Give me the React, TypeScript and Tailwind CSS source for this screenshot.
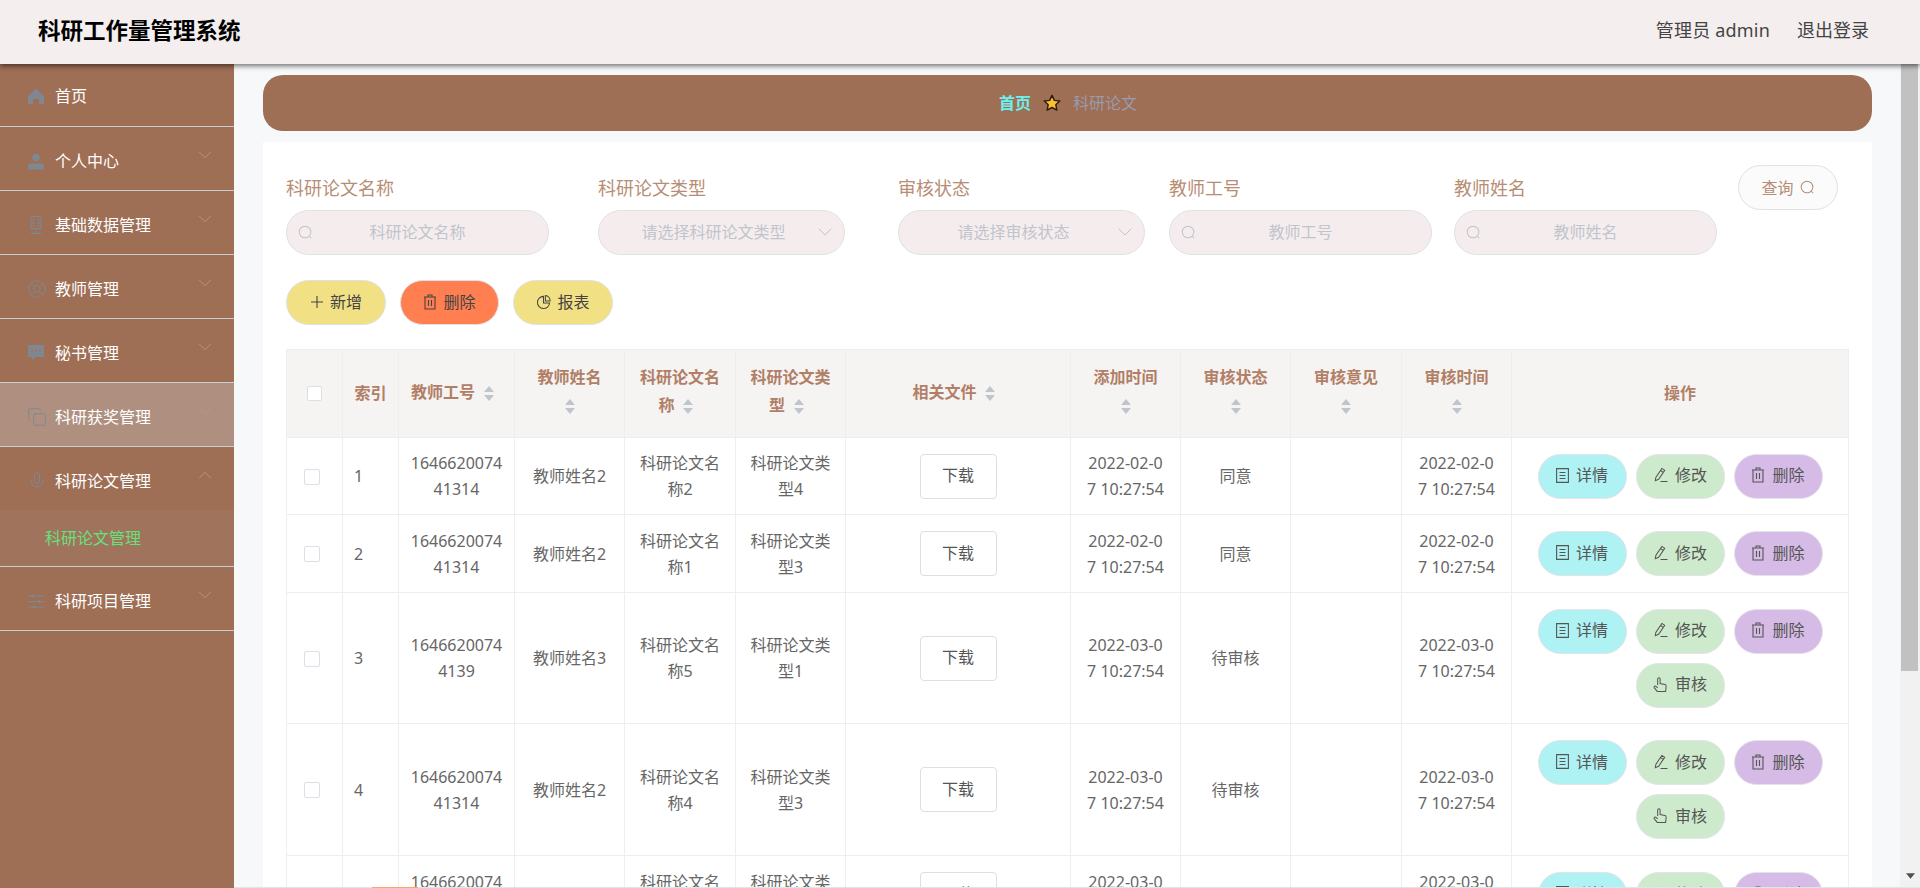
import { ChevronDown, ChevronUp, Copy, LifeBuoy, Mic } from "lucide-react";
import type { ReactNode } from "react";

const line = { fill: "none", stroke: "currentColor", strokeWidth: 1.1 };

const SearchIcon = ({ className }: { className: string }) => (
  <svg viewBox="0 0 16 16" className={className} {...line}>
    <circle cx="7.5" cy="7.5" r="6.2" />
    <path d="M12 12l2 2" />
  </svg>
);

const PlusIcon = () => (
  <svg viewBox="0 0 14 14" className="w-[14px] h-[14px]" {...line}>
    <path d="M7 1v12M1 7h12" />
  </svg>
);

const TrashIcon = () => (
  <svg viewBox="0 0 14 16" className="w-[14px] h-[16px]" {...line}>
    <path d="M1 3h12M5 3V1h4v2M2 3v12h10V3M5.5 6v6M8.5 6v6" />
  </svg>
);

const ChartIcon = () => (
  <svg viewBox="0 0 16 16" className="w-[15px] h-[16px]" {...line}>
    <path d="M8 2a6.5 6.5 0 1 0 6.5 7H8z" />
    <path d="M10 1a5.5 5.5 0 0 1 5 6h-5z" />
  </svg>
);

const DocIcon = () => (
  <svg viewBox="0 0 13 15" className="w-[13px] h-[15px]" {...line}>
    <path d="M.6.6h11.8v13.8H.6zM3.5 4.5h6M3.5 7.5h6M3.5 10.5h6" />
  </svg>
);

const EditIcon = () => (
  <svg viewBox="0 0 16 16" className="w-[15px] h-[16px]" {...line}>
    <path d="M9.5 1l3 2-6.500 9.500-3.500 1.500.5-3.500zM8 3.200l3 2M8 15h7.500" />
  </svg>
);

const ThumbIcon = () => (
  <svg viewBox="0 0 16 16" className="w-[15px] h-[15px]" {...line}>
    <path d="M5 8.500V2a1.300 1.300 0 0 1 2.600 0v5l5.200 1a1.600 1.600 0 0 1 1.200 1.700l-.5 5.700H4.500L1.300 11.300a1.100 1.100 0 0 1 1.500-1.500L5 11.500" />
  </svg>
);

const HomeIcon = () => (
  <svg viewBox="0 0 16 16" className="w-[16px] h-[16px]" fill="currentColor">
    <path d="M8 .5L16 8v8h-5v-5H5v5H0V8z" />
  </svg>
);

const UserIcon = () => (
  <svg viewBox="0 0 16 16" className="w-[16px] h-[17px]" fill="currentColor">
    <circle cx="8" cy="4" r="3.800" />
    <path d="M0 12.500a2.500 2.500 0 0 1 2.500-2.500h11a2.500 2.500 0 0 1 2.500 2.500V16H0z" />
  </svg>
);

const RecorderIcon = () => (
  <svg viewBox="0 0 12 18" className="w-[12px] h-[18px] ml-[2px]" fill="none" stroke="currentColor" strokeWidth="1.100">
    <path d="M2 .6h8a1 1 0 0 1 1 1v10a1 1 0 0 1-1 1H2a1 1 0 0 1-1-1v-10a1 1 0 0 1 1-1zM6 12.600v4.800M1 17.400h10M1 4h4M1 7h4M1 10h4M7 4h4M7 7h4M7 10h4" />
  </svg>
);

const ChatIcon = () => (
  <svg viewBox="0 0 16 16" className="w-[16px] h-[16px]" fill="currentColor">
    <path d="M0 0h16v12H7l-3 3.500V12H0z" />
    <circle cx="4" cy="6" r="1" fill="#b0685c" />
    <circle cx="8" cy="6" r="1" fill="#b0685c" />
    <circle cx="12" cy="6" r="1" fill="#b0685c" />
  </svg>
);

const SlidersIcon = () => (
  <svg viewBox="0 0 16 15" className="w-[16px] h-[15px]" fill="currentColor">
    <path d="M0 1.500h16v1H0zM0 7h16v1H0zM0 12.500h16v1H0z" />
    <circle cx="4.500" cy="2" r="1.600" />
    <circle cx="11" cy="7.500" r="1.600" />
    <circle cx="6" cy="13" r="1.600" />
  </svg>
);

const menus: { name: string; icon: ReactNode; arrow?: boolean }[] = [
  { name: "首页", icon: <HomeIcon /> },
  { name: "个人中心", icon: <UserIcon />, arrow: true },
  { name: "基础数据管理", icon: <RecorderIcon />, arrow: true },
  { name: "教师管理", icon: <LifeBuoy className="w-[20px] h-[20px] -ml-[1px]" strokeWidth={1.2} />, arrow: true },
  { name: "秘书管理", icon: <ChatIcon />, arrow: true },
  { name: "科研获奖管理", icon: <Copy className="w-[20px] h-[20px] -ml-[1px]" strokeWidth={1.1} />, arrow: true },
];

const MenuItem = ({ name, icon, arrow, first, hover }: { name: string; icon: ReactNode; arrow?: boolean; first?: boolean; hover?: boolean }) => (
  <div className={`flex items-center pl-[28px] pr-[18px] border-b border-[#c9ced2] ${first ? "h-[63px] pt-[2px]" : "h-[64px] pt-[5px]"} ${hover ? "bg-[#ae8f80]" : ""}`}>
    <span className="w-[27px] flex justify-start text-[#7f8791]">{icon}</span>
    <span className="text-white text-[16px] flex-1">{name}</span>
    {arrow && <ChevronDown className="w-[22px] h-[22px] mb-[12px] text-[#b59a8b]" strokeWidth={1} />}
  </div>
);

const Sidebar = () => (
  <aside className="w-[234px] shrink-0 bg-[#9e6e55]">
    {menus.map((m, i) => (
      <MenuItem key={m.name} {...m} first={i === 0} hover={i === 5} />
    ))}
    <div className="flex items-center h-[63px] pt-[5px] pl-[28px] pr-[18px]">
      <span className="w-[27px] flex justify-start text-[#7f8791]"><Mic className="w-[20px] h-[20px] -ml-[1px]" strokeWidth={1.2} /></span>
      <span className="text-white text-[16px] flex-1">科研论文管理</span>
      <ChevronUp className="w-[22px] h-[22px] mb-[12px] text-[#b59a8b]" strokeWidth={1} />
    </div>
    <div className="h-[57px] flex items-center pl-[45px] bg-[#a0735c] border-b border-[#c9ced2] text-[16px] text-[#68e07c]">科研论文管理</div>
    <MenuItem name="科研项目管理" icon={<SlidersIcon />} arrow />
  </aside>
);

const SearchField = ({ label, className }: { label: string; className: string }) => (
  <div className={`mt-[11px] w-[263px] ${className}`}>
    <div className="text-[18px] leading-[24px] mb-[10px] text-[#b88d75]">{label}</div>
    <div className="h-[45px] rounded-[23px] border border-[#dfe1e8] bg-[#f5eded] flex items-center relative justify-center pb-[2px] text-[16px] text-[#c0c4cc]">
      <SearchIcon className="absolute left-[11px] top-[14px] w-[15px] h-[15px]" />
      {label}
    </div>
  </div>
);

const SelectField = ({ label, placeholder, className }: { label: string; placeholder: string; className: string }) => (
  <div className={`mt-[11px] w-[247px] ${className}`}>
    <div className="text-[18px] leading-[24px] mb-[10px] text-[#b88d75]">{label}</div>
    <div className="h-[45px] rounded-[23px] border border-[#dfe1e8] bg-[#f5eded] flex items-center justify-center pr-[16px] pb-[2px] relative text-[16px] text-[#c0c4cc]">
      {placeholder}
      <ChevronDown className="absolute right-[7px] top-[9px] w-[24px] h-[24px]" strokeWidth={1} />
    </div>
  </div>
);

const TopButton = ({ bg, width, icon, text }: { bg: string; width: string; icon: ReactNode; text: string }) => (
  <button className={`h-[45px] ${width} ${bg} rounded-[23px] border border-[#dfe1e8] flex items-center justify-center gap-[6px] pb-[2px] text-[16px] text-[#444]`}>
    {icon}
    {text}
  </button>
);

const OpButton = ({ bg, icon, text }: { bg: string; icon: ReactNode; text: string }) => (
  <button className={`h-[45px] w-[89px] ${bg} rounded-[23px] border border-[#e3e3ea] flex items-center justify-center gap-[7px] pb-[2px] text-[16px] text-[#555]`}>
    {icon}
    {text}
  </button>
);

const Sort = () => (
  <span className="inline-flex flex-col items-center justify-center gap-[3px] w-[27px] h-[34px] align-middle">
    <i className="w-0 h-0 border-x-[5px] border-x-transparent border-b-[6px] border-b-[#c0c4cc]" />
    <i className="w-0 h-0 border-x-[5px] border-x-transparent border-t-[6px] border-t-[#c0c4cc]" />
  </span>
);

const colWidths = ["w-[56px]", "w-[56px]", "w-[116px]", "w-[110px]", "w-[111px]", "w-[110px]", "w-[225px]", "w-[110px]", "w-[110px]", "w-[111px]", "w-[110px]", "w-[337px]"];

const heads = ["教师工号", "教师姓名", "科研论文名称", "科研论文类型", "相关文件", "添加时间", "审核状态", "审核意见", "审核时间"];

const rows = [
  { h: "h-[77px]", no: 1, code: "164662007441314", teacher: "教师姓名2", title: "科研论文名称2", type: "科研论文类型4", date: ["2022-02-0", "7 10:27:54"], state: "同意" },
  { h: "h-[78px]", no: 2, code: "164662007441314", teacher: "教师姓名2", title: "科研论文名称1", type: "科研论文类型3", date: ["2022-02-0", "7 10:27:54"], state: "同意" },
  { h: "h-[131px]", no: 3, code: "16466200744139", teacher: "教师姓名3", title: "科研论文名称5", type: "科研论文类型1", date: ["2022-03-0", "7 10:27:54"], state: "待审核" },
  { h: "h-[132px]", no: 4, code: "164662007441314", teacher: "教师姓名2", title: "科研论文名称4", type: "科研论文类型3", date: ["2022-03-0", "7 10:27:54"], state: "待审核" },
  { h: "h-[78px]", no: 5, code: "164662007441314", teacher: "教师姓名1", title: "科研论文名称3", type: "科研论文类型2", date: ["2022-03-0", "7 10:27:54"], state: "同意" },
];

const td = "border border-[#ebeef5] px-[10px] text-center break-all";

const DateCell = ({ date }: { date: string[] }) => (
  <td className={td}>
    {date[0]}
    <br />
    {date[1]}
  </td>
);

const PaperTable = () => (
  <table className="table-fixed w-[1562px] mt-[24px] border-collapse text-[16px] leading-[26px]">
    <colgroup>
      {colWidths.map((w, i) => (
        <col key={i} className={w} />
      ))}
    </colgroup>
    <thead>
      <tr className="h-[88px] bg-[#f6f3f3] text-[#b07f66] font-bold">
        <th className={td}>
          <span className="block w-[15px] h-[15px] mx-auto bg-white border border-[#dcdfe6] rounded-[2px]" />
        </th>
        <th className={`${td} !px-0 !pb-[2px]`}>索引</th>
        {heads.map((h) => (
          <th key={h} className={td}>
            {h}
            <Sort />
          </th>
        ))}
        <th className={`${td} !pb-[2px]`}>操作</th>
      </tr>
    </thead>
    <tbody className="text-[#666]">
      {rows.map((r) => (
        <tr key={r.no} className={r.h}>
          <td className={td}>
            <span className="block w-[16px] h-[16px] ml-[7px] mt-[1px] bg-white border border-[#dcdfe6] rounded-[2px]" />
          </td>
          <td className={`${td} !text-left !pl-[11px]`}>{r.no}</td>
          <td className={td}>{r.code}</td>
          <td className={td}>{r.teacher}</td>
          <td className={td}>{r.title}</td>
          <td className={td}>{r.type}</td>
          <td className={td}>
            <button className="w-[77px] h-[45px] pb-[2px] rounded-[4px] border border-[#dcdfe6] bg-white text-[#555]">下载</button>
          </td>
          <DateCell date={r.date} />
          <td className={td}>{r.state}</td>
          <td className={td}></td>
          <DateCell date={r.date} />
          <td className={td}>
            <div className="flex flex-wrap justify-center gap-x-[9px] gap-y-[9px]">
              <OpButton bg="bg-[#aef2f3]" icon={<DocIcon />} text="详情" />
              <OpButton bg="bg-[#cdebcc]" icon={<EditIcon />} text="修改" />
              <OpButton bg="bg-[#d6bbe6]" icon={<TrashIcon />} text="删除" />
              {r.state === "待审核" && <OpButton bg="bg-[#cdebcc]" icon={<ThumbIcon />} text="审核" />}
            </div>
          </td>
        </tr>
      ))}
    </tbody>
  </table>
);

const Star = () => (
  <svg viewBox="0 0 20 20" className="w-[18px] h-[18px] mx-[12px]">
    <path d="M10 1.500l2.600 5.600 6 .7-4.400 4.100 1.200 6L10 15l-5.400 2.900 1.200-6L1.400 7.800l6-.7z" fill="#fcc02e" stroke="#2b1d14" strokeWidth="1.600" strokeLinejoin="round" />
  </svg>
);

const App = () => {
  return (
    <div className="relative h-[888px] flex flex-col overflow-hidden bg-[#f7f8fa] font-['Noto_Sans','Noto_Sans_CJK_SC',sans-serif]">
      <header className="relative z-10 h-[64px] shrink-0 bg-[#f4eeee] flex items-center justify-between pl-[38px] pr-[51px] pb-[3px] shadow-[0_2px_5px_rgba(0,0,0,0.55)]">
        <strong className="text-[22.500px] font-bold text-black">科研工作量管理系统</strong>
        <div className="flex gap-[27px] text-[18px] text-[#444]">
          <span className="tracking-[0.2px]">管理员 admin</span>
          <span>退出登录</span>
        </div>
      </header>

      <div className="flex flex-1 min-h-0">
        <Sidebar />
        <main className="flex-1 min-w-0 pl-[29px] pr-[28px] pt-[11px] overflow-hidden">
          <div className="h-[56px] rounded-[20px] bg-[#9e6e55] flex items-center justify-center text-[16px]">
            <span className="font-bold text-[#6df0ee] ml-[1px]">首页</span>
            <Star />
            <span className="text-[#9a9bab]">科研论文</span>
          </div>

          <section className="mt-[11px] bg-white pt-[23px] pl-[23px]">
            <div className="flex items-start">
              <SearchField label="科研论文名称" className="" />
              <SelectField label="科研论文类型" placeholder="请选择科研论文类型" className="ml-[49px]" />
              <SelectField label="审核状态" placeholder="请选择审核状态" className="ml-[53px]" />
              <SearchField label="教师工号" className="ml-[24px]" />
              <SearchField label="教师姓名" className="ml-[22px]" />
              <button className="ml-[21px] w-[100px] h-[45px] rounded-[23px] border border-[#dfe1e8] bg-[#fbfbfb] flex items-center justify-center gap-[6px] text-[16px] text-[#b88d75]">
                查询
                <SearchIcon className="w-[15px] h-[15px]" />
              </button>
            </div>

            <div className="flex mt-[25px]">
              <TopButton bg="bg-[#f1e184]" width="w-[100px]" icon={<PlusIcon />} text="新增" />
              <div className="ml-[14px]">
                <TopButton bg="bg-[#ff7f50]" width="w-[99px]" icon={<TrashIcon />} text="删除" />
              </div>
              <div className="ml-[14px]">
                <TopButton bg="bg-[#f1e184]" width="w-[100px]" icon={<ChartIcon />} text="报表" />
              </div>
            </div>

            <PaperTable />
          </section>
        </main>

        <div className="w-[20px] shrink-0 bg-[#f1f1f1] flex flex-col">
          <div className="h-[607px] ml-[1px] mr-[2px] bg-[#c1c1c1]" />
          <svg viewBox="0 0 10 6" className="mt-auto mb-[9px] w-[9px] h-[6px] mx-auto">
            <path d="M0 0h10L5 6z" fill="#505050" />
          </svg>
        </div>
      </div>

      <div className="absolute bottom-0 left-[234px] right-0 h-[1px] bg-[#dfe5ea]">
        <div className="w-[46px] h-[1px] ml-[138px] bg-[#f3a96b]" />
      </div>
    </div>
  );
};

export default App;
